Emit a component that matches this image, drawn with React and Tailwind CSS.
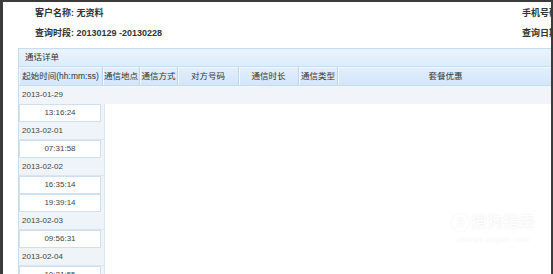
import React from 'react';

const columns = [
  { label: '起始时间(hh:mm:ss)', w: 'w-[84px]' },
  { label: '通信地点', w: 'w-[37px]' },
  { label: '通信方式', w: 'w-[38px]' },
  { label: '对方号码', w: 'w-[61px]' },
  { label: '通信时长', w: 'w-[60px]' },
  { label: '通信类型', w: 'w-[39px]' },
  { label: '套餐优惠', w: 'w-[216px]' },
];

const records = [
  { date: '2013-02-01', times: ['07:31:58'] },
  { date: '2013-02-02', times: ['16:35:14', '19:39:14'] },
  { date: '2013-02-03', times: ['09:56:31'] },
  { date: '2013-02-04', times: ['10:21:55'] },
];

const DateRow = ({ date }) => (
  <div className="h-[18px] flex items-center pl-[3px] text-[8px] text-[#444] bg-[#eff4f9] border-b border-[#d7e5f2]">
    {date}
  </div>
);

const TimeRow = ({ time }) => (
  <div className="h-[18px] flex items-center justify-center bg-white border border-[#cfe1f1] mr-[3px] text-[8px] text-[#444]">
    {time}
  </div>
);

const App = () => {
  return (
    <div
      className="w-[553px] h-[274px] overflow-hidden bg-[#3b3b3b] pt-[2px] pl-[3px] pr-[2px]"
      style={{ fontFamily: '"Liberation Sans", "Noto Sans CJK SC", sans-serif' }}
    >
      <div className="relative h-full bg-white overflow-hidden">
        {/* Customer info */}
        <div className="flex h-[46px] text-[9px] font-bold text-[#333]">
          <div className="flex-1 pl-[32px] flex flex-col pt-[5px] gap-[8px]">
            <div className="h-[12px] leading-[12px]">客户名称: 无资料</div>
            <div className="h-[12px] leading-[12px]">查询时段: 20130129 -20130228</div>
          </div>
          <div className="w-[29px] overflow-hidden whitespace-nowrap flex flex-col pt-[5px] gap-[8px]">
            <div className="h-[12px] leading-[12px]">手机号码:</div>
            <div className="h-[12px] leading-[12px]">查询日期:</div>
          </div>
        </div>

        {/* Detail panel */}
        <div className="ml-[15px] w-[560px] border-l border-t border-[#c6dcf0]">
          <div className="h-[18px] flex items-center pl-[6px] text-[8.5px] text-[#333] bg-gradient-to-b from-[#eaf4fd] to-[#dcecfb] border-b border-[#c6dcf0]">
            通话详单
          </div>
          <div className="flex h-[19px] bg-gradient-to-b from-[#e2effc] to-[#d3e7fa] border-b border-[#c6dcf0]">
            {columns.map((c) => (
              <div
                key={c.label}
                className={`${c.w} shrink-0 flex items-center justify-center text-[8.5px] text-[#333] whitespace-nowrap border-r border-[#bcd6ee] shadow-[inset_1px_1px_0_#f2f8fe]`}
              >
                {c.label}
              </div>
            ))}
          </div>
          <div className="h-[18px] flex items-center pl-[3px] text-[8px] text-[#444] bg-[#f1f5f9]">
            2013-01-29
          </div>
          <div className="w-[86px] bg-[#eff4f9] border-r border-[#dbe7f3]">
            <TimeRow time="13:16:24" />
            {records.map((r) => (
              <React.Fragment key={r.date}>
                <DateRow date={r.date} />
                {r.times.map((t) => (
                  <TimeRow key={t} time={t} />
                ))}
              </React.Fragment>
            ))}
          </div>
        </div>

        {/* Watermark */}
        <div className="absolute left-[449px] top-[211px] flex flex-col items-center text-white [text-shadow:0_0_2px_#e6e6e6]">
          <div className="flex items-center gap-[2px]">
            <div className="w-[17px] h-[17px] rounded-full border-2 border-white shadow-[0_0_2px_#e6e6e6] flex items-center justify-center text-[11px] font-bold">
              S
            </div>
            <span className="text-[16px] leading-[18px]">搜狗指南</span>
          </div>
          <div className="text-[7px] tracking-[1px] mt-[4px]">zhinan.sogou.com</div>
        </div>
      </div>
    </div>
  );
};

export default App;
